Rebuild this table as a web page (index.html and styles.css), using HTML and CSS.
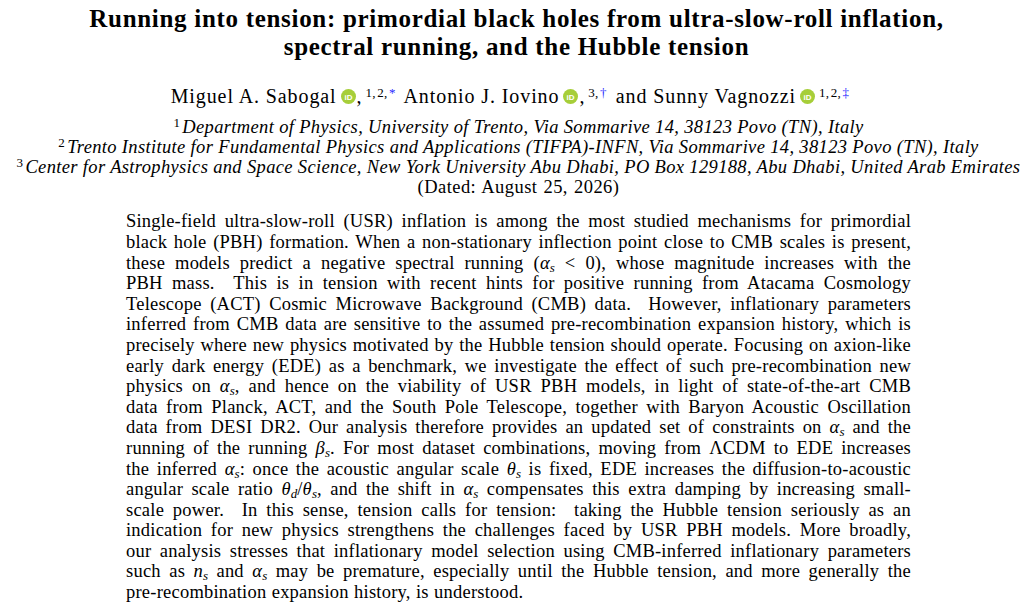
FILE: index.html
```html
<!DOCTYPE html>
<html lang="en">
<head>
<meta charset="utf-8">
<title>Running into tension</title>
<link rel="stylesheet" href="styles.css">
</head>
<body>
<main class="page">
  <h1 class="title">
    <span class="tl">Running into tension: primordial black holes from ultra-slow-roll inflation,</span>
    <span class="tl">spectral running, and the Hubble tension</span>
  </h1>

  <p class="authors">
    Miguel A. Sabogal<svg class="orcid" viewBox="0 0 16 16" aria-label="ORCID"><circle cx="8" cy="8" r="8" fill="#A6CE39"/><text x="8" y="11.3" text-anchor="middle" class="orcid-t">iD</text></svg>,<sup class="aff">1,&#8202;2,&#8202;<span class="mark">*</span></sup>
    Antonio J. Iovino<svg class="orcid" viewBox="0 0 16 16" aria-label="ORCID"><circle cx="8" cy="8" r="8" fill="#A6CE39"/><text x="8" y="11.3" text-anchor="middle" class="orcid-t">iD</text></svg>,<sup class="aff">3,&#8202;<span class="mark">†</span></sup>
    and Sunny Vagnozzi<svg class="orcid" viewBox="0 0 16 16" aria-label="ORCID"><circle cx="8" cy="8" r="8" fill="#A6CE39"/><text x="8" y="11.3" text-anchor="middle" class="orcid-t">iD</text></svg><sup class="aff">1,&#8202;2,&#8202;<span class="mark">‡</span></sup>
  </p>

  <div class="affils">
    <p class="affil"><sup class="num">1</sup>Department of Physics, University of Trento, Via Sommarive 14, 38123 Povo (TN), Italy</p>
    <p class="affil"><sup class="num">2</sup>Trento Institute for Fundamental Physics and Applications (TIFPA)-INFN, Via Sommarive 14, 38123 Povo (TN), Italy</p>
    <p class="affil"><sup class="num">3</sup>Center for Astrophysics and Space Science, New York University Abu Dhabi, PO Box 129188, Abu Dhabi, United Arab Emirates</p>
    <p class="dated">(Dated: August 25, 2026)</p>
  </div>

  <section class="abstract">
    <span class="ln">Single-field ultra-slow-roll (USR) inflation is among the most studied mechanisms for primordial</span>
    <span class="ln">black hole (PBH) formation. When a non-stationary inflection point close to CMB scales is present,</span>
    <span class="ln">these models predict a negative spectral running (<i class="m">α</i><sub class="s">s</sub> &lt; 0), whose magnitude increases with the</span>
    <span class="ln">PBH mass. &nbsp;This is in tension with recent hints for positive running from Atacama Cosmology</span>
    <span class="ln">Telescope (ACT) Cosmic Microwave Background (CMB) data. &nbsp;However, inflationary parameters</span>
    <span class="ln">inferred from CMB data are sensitive to the assumed pre-recombination expansion history, which is</span>
    <span class="ln">precisely where new physics motivated by the Hubble tension should operate. Focusing on axion-like</span>
    <span class="ln">early dark energy (EDE) as a benchmark, we investigate the effect of such pre-recombination new</span>
    <span class="ln">physics on <i class="m">α</i><sub class="s">s</sub>, and hence on the viability of USR PBH models, in light of state-of-the-art CMB</span>
    <span class="ln">data from Planck, ACT, and the South Pole Telescope, together with Baryon Acoustic Oscillation</span>
    <span class="ln">data from DESI DR2. Our analysis therefore provides an updated set of constraints on <i class="m">α</i><sub class="s">s</sub> and the</span>
    <span class="ln">running of the running <i class="m">β</i><sub class="s">s</sub>. For most dataset combinations, moving from ΛCDM to EDE increases</span>
    <span class="ln">the inferred <i class="m">α</i><sub class="s">s</sub>: once the acoustic angular scale <i class="m">θ</i><sub class="s">s</sub> is fixed, EDE increases the diffusion-to-acoustic</span>
    <span class="ln">angular scale ratio <i class="m">θ</i><sub class="s">d</sub>/<i class="m">θ</i><sub class="s">s</sub>, and the shift in <i class="m">α</i><sub class="s">s</sub> compensates this extra damping by increasing small-</span>
    <span class="ln">scale power. &nbsp;In this sense, tension calls for tension: &nbsp;taking the Hubble tension seriously as an</span>
    <span class="ln">indication for new physics strengthens the challenges faced by USR PBH models. More broadly,</span>
    <span class="ln">our analysis stresses that inflationary model selection using CMB-inferred inflationary parameters</span>
    <span class="ln">such as <i class="m">n</i><sub class="s">s</sub> and <i class="m">α</i><sub class="s">s</sub> may be premature, especially until the Hubble tension, and more generally the</span>
    <span class="ln last">pre-recombination expansion history, is understood.</span>
  </section>
</main>
</body>
</html>
```

FILE: styles.css
```css
html, body {
  margin: 0;
  padding: 0;
  background: #ffffff;
}

body {
  font-family: "Liberation Serif", "Times New Roman", serif;
  color: #000000;
}

.page {
  width: 1033px;
  height: 603px;
  overflow: hidden;
}

.title {
  margin: 0;
  padding-top: 4.6px;
  font-size: 25px;
  line-height: 28px;
  font-weight: bold;
  text-align: center;
  letter-spacing: 0.7px;
}

.tl {
  display: block;
}

.authors {
  margin: 25.6px 0 0 0;
  font-size: 20px;
  line-height: 20px;
  letter-spacing: 0.9px;
  text-align: center;
  padding-right: 10px;
}

.orcid {
  width: 15px;
  height: 15px;
  vertical-align: -1px;
  margin-left: 4px;
  margin-right: 1px;
}

.orcid-t {
  font-family: "Liberation Sans", Arial, sans-serif;
  font-size: 8.5px;
  font-weight: bold;
  letter-spacing: 0;
  fill: #ffffff;
}

.aff {
  font-size: 13px;
  line-height: 0;
  letter-spacing: 0.3px;
  vertical-align: 6px;
  margin-left: 3px;
  margin-right: 3px;
}

.mark {
  color: #2a2aff;
}

.affils {
  margin-top: 10.4px;
}

.affil,
.dated {
  margin: 0;
  font-size: 18.5px;
  line-height: 20.2px;
  text-align: center;
  padding-left: 4px;
}

.affil {
  font-style: italic;
  letter-spacing: 0.35px;
}

.dated {
  letter-spacing: 0.45px;
  word-spacing: 1px;
}

.num {
  font-style: normal;
  font-size: 13px;
  line-height: 0;
  vertical-align: 6px;
  margin-right: 2px;
}

.abstract {
  display: block;
  width: 785px;
  margin: 14px 0 0 126px;
  font-size: 18.5px;
  line-height: 20.6px;
  letter-spacing: 0.22px;
  word-spacing: 0.5px;
}

.ln {
  display: block;
  text-align: justify;
  text-align-last: justify;
  white-space: nowrap;
}

.ln.last {
  text-align-last: left;
}

.m {
  font-style: italic;
}

.s {
  font-style: italic;
  font-size: 13px;
  line-height: 0;
  letter-spacing: 0;
  vertical-align: -3px;
}
```
